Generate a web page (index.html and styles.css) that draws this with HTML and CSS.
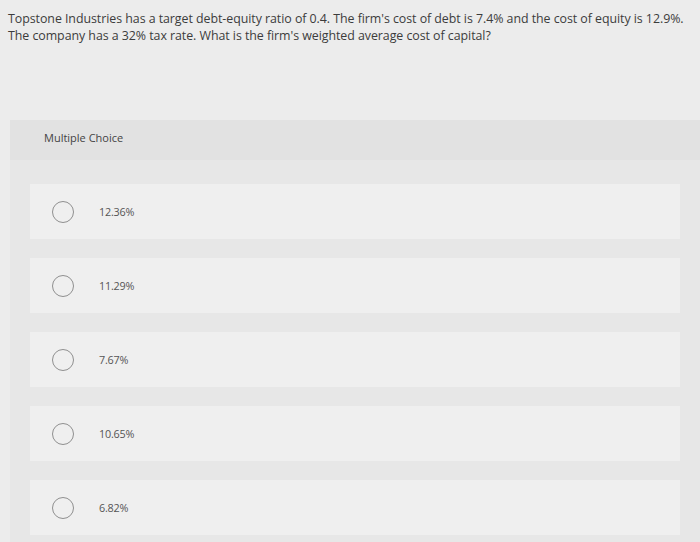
FILE: index.html
```html
<!DOCTYPE html>
<html>
<head>
<meta charset="utf-8">
<link rel="stylesheet" href="styles.css">
</head>
<body>
<div class="question">Topstone Industries has a target debt-equity ratio of 0.4. The firm's cost of debt is 7.4% and the cost of equity is 12.9%.<br>The company has a 32% tax rate. What is the firm's weighted average cost of capital?</div>
<div class="panel">
  <div class="panel-header">Multiple Choice</div>
  <div class="options">
    <div class="option"><span class="radio"></span><span class="label">12.36%</span></div>
    <div class="option"><span class="radio"></span><span class="label">11.29%</span></div>
    <div class="option"><span class="radio"></span><span class="label">7.67%</span></div>
    <div class="option"><span class="radio"></span><span class="label">10.65%</span></div>
    <div class="option"><span class="radio"></span><span class="label">6.82%</span></div>
  </div>
</div>
</body>
</html>
```
FILE: styles.css
```css
html, body {
  margin: 0;
  padding: 0;
  background: #ececec;
  font-family: "Open Sans", "Liberation Sans", sans-serif;
}
.question {
  padding: 10px 4px 0 8px;
  height: 120px;
  box-sizing: border-box;
  font-size: 12.4px;
  line-height: 17px;
  color: #3c3c3c;
  white-space: nowrap;
  letter-spacing: -0.05px;
}
.panel {
  margin-left: 10px;
  background: #e7e7e7;
  padding-bottom: 10px;
}
.panel-header {
  height: 40px;
  background: #e2e2e2;
  padding-left: 34px;
  font-size: 11px;
  line-height: 36px;
  color: #444;
  margin-bottom: 24px;
}
.options {
  display: flex;
  flex-direction: column;
  gap: 19px;
  padding: 0 20px;
}
.option {
  height: 55px;
  background: #efefef;
  display: flex;
  align-items: center;
}
.radio {
  width: 20px;
  height: 20px;
  border: 1.5px solid #8f8f8f;
  border-radius: 50%;
  margin-left: 22px;
  flex: none;
}
.label {
  margin-left: 25px;
  font-size: 10.8px;
  color: #555;
  letter-spacing: -0.2px;
}
```
